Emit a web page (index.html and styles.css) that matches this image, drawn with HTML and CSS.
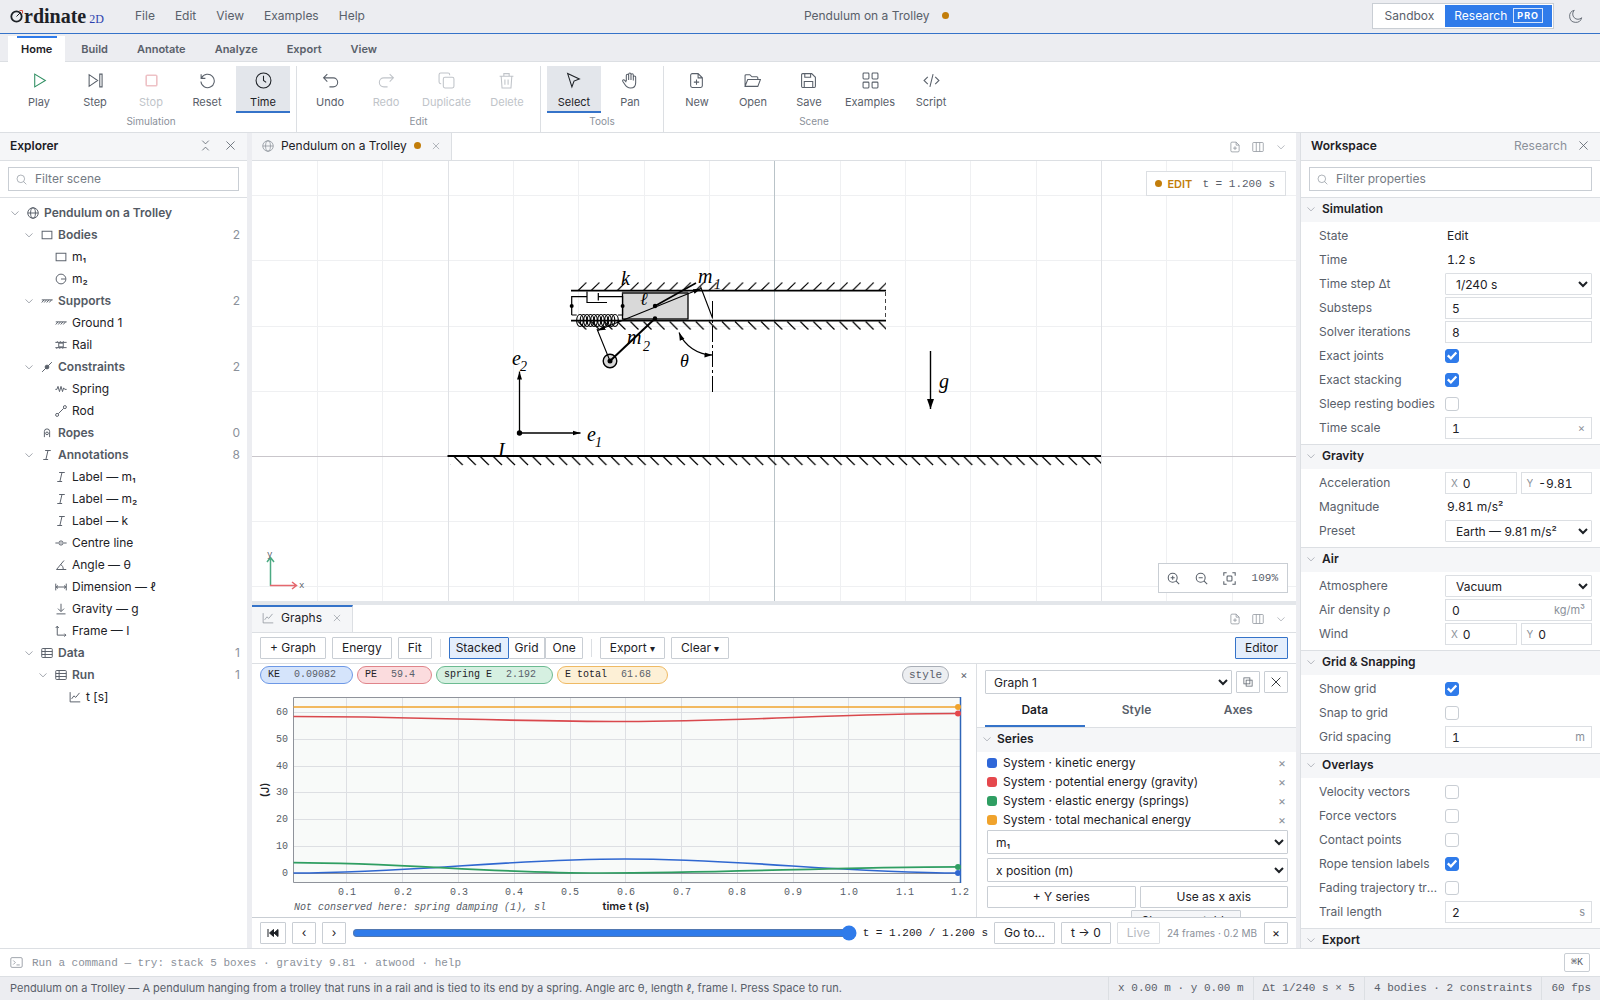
FILE: index.html
```html
<!DOCTYPE html>
<html lang="en">
<head>
<meta charset="utf-8">
<title>Pendulum on a Trolley — Ordinate 2D</title>
<link rel="stylesheet" href="styles.css">
</head>
<body>
<svg class="defs" aria-hidden="true">
  <symbol id="i-chev" viewBox="0 0 16 16"><path d="M2.500 5.500 8 11 13.500 5.500"/></symbol>
  <symbol id="i-x" viewBox="0 0 16 16"><path d="M3 3l10 10M13 3 3 13"/></symbol>
  <symbol id="i-search" viewBox="0 0 16 16"><circle cx="7" cy="7" r="5.500"/><path d="M11 11 15 15"/></symbol>
  <symbol id="i-globe" viewBox="0 0 16 16"><circle cx="8" cy="8" r="7"/><ellipse cx="8" cy="8" rx="3.200" ry="7"/><path d="M1 8h14"/></symbol>
  <symbol id="i-box" viewBox="0 0 16 16"><rect x="1.500" y="3" width="13" height="10"/></symbol>
  <symbol id="i-disc" viewBox="0 0 16 16"><circle cx="8" cy="8" r="6.500"/><path d="M8 8h6"/></symbol>
  <symbol id="i-ground" viewBox="0 0 16 16"><path d="M1 6.500h14.500M4 6.500l-3 3.500M7.300 6.500l-3 3.500M10.600 6.500l-3 3.500M14 6.500l-3 3.500"/></symbol>
  <symbol id="i-rail" viewBox="0 0 16 16"><path d="M.5 4.500h15M.5 11.500h15M2 4.500 3.500 3M6 4.500 7.500 3M10 4.500 11.500 3M2 13l1.500-1.500M6 13l1.500-1.500M10 13l1.500-1.500"/><rect x="5" y="5.500" width="6" height="5"/></symbol>
  <symbol id="i-joint" viewBox="0 0 16 16"><path d="M1.500 14.500l5-5M9.500 6.500l5-5"/><circle cx="8" cy="8" r="2.500" fill="currentColor"/></symbol>
  <symbol id="i-spring" viewBox="0 0 16 16"><path d="M.5 8.500h2l1.500-4 2 7 2-7 2 7 1.500-5 1.500 2h2.500"/></symbol>
  <symbol id="i-rod" viewBox="0 0 16 16"><circle cx="2.800" cy="13.200" r="2"/><circle cx="13.200" cy="2.800" r="2"/><path d="M4.400 11.600l7.200-7.200"/></symbol>
  <symbol id="i-rope" viewBox="0 0 16 16"><path d="M4.500 13.500V6a3.500 3.500 0 0 1 7 0v7.500"/><circle cx="8" cy="8.500" r="1.800"/></symbol>
  <symbol id="i-italic" viewBox="0 0 16 16"><path d="M5.500 2h7.500M3 14h6.500M9.300 2 6.500 14"/></symbol>
  <symbol id="i-centre" viewBox="0 0 16 16"><circle cx="8" cy="8" r="2.800"/><path d="M.5 8h4M7 8h2M11.500 8h4"/></symbol>
  <symbol id="i-angle" viewBox="0 0 16 16"><path d="M12 2 2 14h13M7.500 7.500c2.500 1 3.500 3.500 3.500 6.500"/></symbol>
  <symbol id="i-dim" viewBox="0 0 16 16"><path d="M1 3.500v9M15 3.500v9M1.500 8h13M4 6 1.500 8 4 10M12 6l2.500 2L12 10"/></symbol>
  <symbol id="i-down" viewBox="0 0 16 16"><path d="M8 1V11M4 7.500 8 11.500 12 7.500M2 14.500h12"/></symbol>
  <symbol id="i-frame" viewBox="0 0 16 16"><path d="M3 2v11.500h11.500M1 4l2-2.500L5 4M12.500 11.500l2 2-2 2"/></symbol>
  <symbol id="i-table" viewBox="0 0 16 16"><rect x="1" y="2" width="14" height="12" rx="1"/><path d="M1 6h14M1 10h14M5.500 2v12"/></symbol>
  <symbol id="i-chart" viewBox="0 0 16 16"><path d="M1.500 1.500v13H15M3.500 10.500 6.500 6.500l2.500 2 5-6"/></symbol>
  <symbol id="i-docplus" viewBox="0 0 16 16"><path d="M9.500 1.500H4a1.500 1.500 0 0 0-1.500 1.500v10A1.500 1.500 0 0 0 4 14.500h8a1.500 1.500 0 0 0 1.500-1.500V5.500zM9.500 1.500v4h4M8 7v5M5.500 9.500h5"/></symbol>
  <symbol id="i-cols" viewBox="0 0 16 16"><rect x="1" y="2" width="14" height="12" rx="1"/><path d="M5.700 2v12M10.300 2v12"/></symbol>
</svg>

<header class="titlebar">
  <div class="logo">
    <svg width="14" height="15" viewBox="0 0 14 15"><circle cx="6.500" cy="8.500" r="5.200" fill="none" stroke="#1d2126" stroke-width="1.800"/><path d="M6.500 8.500l4.500-4.500" stroke="#1d2126"/><path d="M9.500 2.500h3V5.500" fill="none" stroke="#d9503f"/></svg><span class="logo-word">rdinate</span><span class="logo-2d">2D</span>
  </div>
  <nav class="menus"><button>File</button><button>Edit</button><button>View</button><button>Examples</button><button>Help</button></nav>
  <div class="doc-title">Pendulum on a Trolley<i class="dot"></i></div>
  <div class="mode"><button>Sandbox</button><button class="on">Research<span class="pro">PRO</span></button></div>
  <button class="moon" aria-label="Dark theme"><svg width="14" height="14" viewBox="0 0 16 16"><path d="M6 1.500A7 7 0 1 0 14.500 10 5.800 5.800 0 0 1 6 1.500z"/></svg></button>
</header>

<nav class="ribbon-tabs">
  <button class="on">Home</button><button>Build</button><button>Annotate</button><button>Analyze</button><button>Export</button><button>View</button>
</nav>

<div class="ribbon">
  <section class="group">
    <div class="tools">
      <button><svg viewBox="0 0 16 16" class="green"><path d="M3.500 2v12L13.500 8z"/></svg>Play</button>
      <button><svg viewBox="0 0 16 16"><path d="M2 2.500v11L10 8zM12 2h2.200v12H12z"/></svg>Step</button>
      <button disabled><svg viewBox="0 0 16 16" class="red"><rect x="3" y="3" width="10" height="10" rx="1"/></svg>Stop</button>
      <button><svg viewBox="0 0 16 16"><path d="M2 2v4h4M2.500 5.500A6.300 6.300 0 1 1 1.800 9"/></svg>Reset</button>
      <button class="on"><svg viewBox="0 0 16 16"><circle cx="8" cy="8" r="7"/><path d="M8 3.500V8l2.500 1.800"/></svg>Time</button>
    </div>
    <h2>Simulation</h2>
  </section>
  <section class="group">
    <div class="tools">
      <button><svg viewBox="0 0 16 16"><path d="M5 2 1.500 5.500 5 9M1.500 5.500h9a4 4 0 0 1 0 8.500H7"/></svg>Undo</button>
      <button disabled><svg viewBox="0 0 16 16"><path d="M11 2l3.500 3.500L11 9M14.500 5.500h-9a4 4 0 0 0 0 8.500H9"/></svg>Redo</button>
      <button disabled><svg viewBox="0 0 16 16"><rect x="5" y="5" width="10" height="10" rx="1.500"/><path d="M3 11H2.500A1.500 1.500 0 0 1 1 9.500v-7A1.500 1.500 0 0 1 2.500 1h7A1.500 1.500 0 0 1 11 2.500V3"/></svg>Duplicate</button>
      <button disabled><svg viewBox="0 0 16 16"><path d="M1.500 4h13M5.500 4V1.500h5V4M3 4l.8 11h8.400L13 4M6.500 7v5M9.500 7v5"/></svg>Delete</button>
    </div>
    <h2>Edit</h2>
  </section>
  <section class="group">
    <div class="tools">
      <button class="on"><svg viewBox="0 0 16 16"><path d="M2.500 1.500 13.500 6.500 8.500 8.500 6.500 14z"/></svg>Select</button>
      <button><svg viewBox="0 0 16 16"><path d="M5 8.500V3.200a1.100 1.100 0 0 1 2.200 0V7.500 2a1.100 1.100 0 0 1 2.200 0V7.500 2.800a1.100 1.100 0 0 1 2.200 0V8 4.800a1.100 1.100 0 0 1 2.200 0V10c0 3-2 5-4.800 5S5 14 3.500 11.500L1.600 8.800c-.5-1 .8-1.900 1.700-1.200L5 9.500"/></svg>Pan</button>
    </div>
    <h2>Tools</h2>
  </section>
  <section class="group">
    <div class="tools">
      <button><svg><use href="#i-docplus"/></svg>New</button>
      <button><svg viewBox="0 0 16 16"><path d="M1 13V3.500A1 1 0 0 1 2 2.500h3.500l2 2H12a1 1 0 0 1 1 1V7M1 13.500 3.500 7h12L13 13.500z"/></svg>Open</button>
      <button><svg viewBox="0 0 16 16"><path d="M2.500 1.500H11L14.500 5v8.500a1 1 0 0 1-1 1h-11a1 1 0 0 1-1-1v-11a1 1 0 0 1 1-1zM4.500 1.500V5H10V1.500M4 14.500V9h8v5.500"/></svg>Save</button>
      <button><svg viewBox="0 0 16 16"><rect x="1" y="1" width="5.500" height="5.500" rx=".8"/><rect x="9.500" y="1" width="5.500" height="5.500" rx=".8"/><rect x="1" y="9.500" width="5.500" height="5.500" rx=".8"/><rect x="9.500" y="9.500" width="5.500" height="5.500" rx=".8"/></svg>Examples</button>
      <button><svg viewBox="0 0 16 16"><path d="M4.500 4.500 1 8l3.500 3.500M11.500 4.500 15 8l-3.500 3.500M9.500 2l-3 12"/></svg>Script</button>
    </div>
    <h2>Scene</h2>
  </section>
</div>

<main class="main">
  <aside class="explorer">
    <div class="panel-head"><h2>Explorer</h2><span class="grow"></span>
      <button aria-label="Collapse all"><svg viewBox="0 0 16 16"><path d="M4 2l4 4 4-4M4 14l4-4 4 4"/></svg></button>
      <button aria-label="Close explorer"><svg><use href="#i-x"/></svg></button></div>
    <div class="filter"><label><svg><use href="#i-search"/></svg><input placeholder="Filter scene" aria-label="Filter scene"></label></div>
    <ul class="tree">
      <li class="branch"><svg class="chev"><use href="#i-chev"/></svg><svg><use href="#i-globe"/></svg>Pendulum on a Trolley</li>
      <li class="branch l1"><svg class="chev"><use href="#i-chev"/></svg><svg><use href="#i-box"/></svg>Bodies<b>2</b></li>
      <li class="l2"><svg><use href="#i-box"/></svg>m₁</li>
      <li class="l2"><svg><use href="#i-disc"/></svg>m₂</li>
      <li class="branch l1"><svg class="chev"><use href="#i-chev"/></svg><svg><use href="#i-ground"/></svg>Supports<b>2</b></li>
      <li class="l2"><svg><use href="#i-ground"/></svg>Ground 1</li>
      <li class="l2"><svg><use href="#i-rail"/></svg>Rail</li>
      <li class="branch l1"><svg class="chev"><use href="#i-chev"/></svg><svg><use href="#i-joint"/></svg>Constraints<b>2</b></li>
      <li class="l2"><svg><use href="#i-spring"/></svg>Spring</li>
      <li class="l2"><svg><use href="#i-rod"/></svg>Rod</li>
      <li class="branch l1"><svg class="chev"></svg><svg><use href="#i-rope"/></svg>Ropes<b>0</b></li>
      <li class="branch l1"><svg class="chev"><use href="#i-chev"/></svg><svg><use href="#i-italic"/></svg>Annotations<b>8</b></li>
      <li class="l2"><svg><use href="#i-italic"/></svg>Label — m₁</li>
      <li class="l2"><svg><use href="#i-italic"/></svg>Label — m₂</li>
      <li class="l2"><svg><use href="#i-italic"/></svg>Label — k</li>
      <li class="l2"><svg><use href="#i-centre"/></svg>Centre line</li>
      <li class="l2"><svg><use href="#i-angle"/></svg>Angle — θ</li>
      <li class="l2"><svg><use href="#i-dim"/></svg>Dimension — ℓ</li>
      <li class="l2"><svg><use href="#i-down"/></svg>Gravity — g</li>
      <li class="l2"><svg><use href="#i-frame"/></svg>Frame — I</li>
      <li class="branch l1"><svg class="chev"><use href="#i-chev"/></svg><svg><use href="#i-table"/></svg>Data<b>1</b></li>
      <li class="branch l2c"><svg class="chev"><use href="#i-chev"/></svg><svg><use href="#i-table"/></svg>Run<b>1</b></li>
      <li class="l3"><svg><use href="#i-chart"/></svg>t [s]</li>
    </ul>
  </aside>

  <div class="center">
    <div class="tabs">
      <div class="tab"><svg><use href="#i-globe"/></svg>Pendulum on a Trolley<i class="dot"></i><button aria-label="Close tab"><svg><use href="#i-x"/></svg></button></div>
      <span class="grow"></span>
      <button aria-label="New document"><svg><use href="#i-docplus"/></svg></button><button aria-label="Split"><svg><use href="#i-cols"/></svg></button><button aria-label="More"><svg><use href="#i-chev"/></svg></button>
    </div>
    <div class="canvas">
      <svg class="scene" viewBox="252 161 1044 440" preserveAspectRatio="xMidYMid slice">
        <defs>
          <pattern id="hatch-up" x="571.700" y="281" width="13.067" height="10" patternUnits="userSpaceOnUse"><path d="M6.500 9.500 14.500 1.500M-6.567 9.500 1.433 1.500" stroke="#000" stroke-width="1.100"/></pattern>
          <pattern id="hatch-down" x="571.700" y="321" width="13.067" height="10" patternUnits="userSpaceOnUse"><path d="M6.500.5 14.500 8.500M-6.567.5 1.433 8.500" stroke="#000" stroke-width="1.200"/></pattern>
          <pattern id="hatch-ground" x="447.700" y="456" width="13.067" height="10" patternUnits="userSpaceOnUse"><path d="M6.500.5 15 9M-6.567.5 1.933 9" stroke="#000" stroke-width="1.200"/></pattern>
          <marker id="arr" viewBox="0 0 8 6" refX="8" refY="3" markerWidth="8" markerHeight="6" markerUnits="userSpaceOnUse" orient="auto-start-reverse"><path d="M0 .5 8 3 0 5.500z"/></marker>
          <marker id="arr-g" viewBox="0 0 10 7" refX="10" refY="3.500" markerWidth="10" markerHeight="7" markerUnits="userSpaceOnUse" orient="auto"><path d="M0 0 10 3.500 0 7z"/></marker>
        </defs>
        <path class="grid" d="M317.500 161v440M382.500 161v440M513.500 161v440M578.500 161v440M644.500 161v440M709.500 161v440M840.500 161v440M905.500 161v440M970.500 161v440M1036.500 161v440M1166.500 161v440M1232.500 161v440M252 195.500h1044M252 260.500h1044M252 326.500h1044M252 391.500h1044M252 521.500h1044M252 586.500h1044"/>
        <path class="grid-major" d="M448.500 161v440M1101.500 161v440"/>
        <path class="axis-y" d="M774.500 161v440"/><path class="axis-x" d="M252 456.500h1044"/>

        <rect x="450" y="456" width="651" height="10" fill="url(#hatch-ground)"/>
        <path d="M447.500 456h653.500" stroke="#000" stroke-width="2"/>

        <rect x="575" y="281" width="311" height="10" fill="url(#hatch-up)"/>
        <rect x="575" y="321" width="311" height="10" fill="url(#hatch-down)"/>
        <path d="M571 290.700h315M571 320.700h315" stroke="#000" stroke-width="1.800"/>
        <path d="M885.500 292v28" stroke="#444" stroke-dasharray="4 3"/>
        <rect x="622.500" y="293" width="65.500" height="26" fill="#d9d9d9" stroke="#000" stroke-width="1.300"/>
        <path d="M622 292.500h66" stroke="#444" stroke-width="1.800"/>

        <g fill="none" stroke="#000" stroke-width="1.200">
          <path d="M571.700 315V296.700H587M587 291.500v11h20M598.300 293v7.500M598.300 296.700h24.300V315h-4.600M571.700 315h5"/>
          <g stroke-width="1.200"><ellipse cx="580" cy="320.500" rx="3.300" ry="6"/><ellipse cx="583.500" cy="320.500" rx="3.300" ry="6"/><ellipse cx="587" cy="320.500" rx="3.300" ry="6"/><ellipse cx="590.500" cy="320.500" rx="3.300" ry="6"/><ellipse cx="594" cy="320.500" rx="3.300" ry="6"/><ellipse cx="597.500" cy="320.500" rx="3.300" ry="6"/><ellipse cx="601" cy="320.500" rx="3.300" ry="6"/><ellipse cx="604.500" cy="320.500" rx="3.300" ry="6"/><ellipse cx="608" cy="320.500" rx="3.300" ry="6"/><ellipse cx="611.500" cy="320.500" rx="3.300" ry="6"/><ellipse cx="615" cy="320.500" rx="3.300" ry="6"/></g>
        </g>
        <circle cx="610" cy="361" r="6.800" fill="#d9d9d9" stroke="#000" stroke-width="1.400"/>
        <path d="M610 361 655 318.500" stroke="#000" stroke-width="2"/>
        <path d="M655 306 696 283" stroke="#000" stroke-width="1.600"/>
        <path d="M597.500 330.500 701 288.500" stroke="#000" stroke-width="1.100" marker-start="url(#arr)" marker-end="url(#arr)"/>
        <path d="M610 361 597 329M712.700 318.500 700.500 286.500" stroke="#000" stroke-width="1.100"/>
        <circle cx="571.700" cy="306" r="2"/><circle cx="622.600" cy="306" r="2"/><circle cx="655" cy="306" r="2.200"/><circle cx="655" cy="318.500" r="2.200"/><circle cx="610" cy="361" r="2.500"/>
        <path d="M712.500 301v91" stroke="#000" stroke-dasharray="16 3 3 3"/>
        <path d="M679 332.500A37 37 0 0 0 712.500 355" fill="none" stroke="#000" stroke-width="1.200" marker-start="url(#arr)" marker-end="url(#arr)"/>

        <path d="M519.500 433V371.500" stroke="#000" stroke-width="1.300" marker-end="url(#arr)"/>
        <path d="M519.500 433h61" stroke="#000" stroke-width="1.300" marker-end="url(#arr)"/>
        <circle cx="519.500" cy="433" r="2.700"/>
        <path d="M930.500 351v58" stroke="#000" stroke-width="1.400" marker-end="url(#arr-g)"/>

        <g class="sym">
          <text x="621" y="285">k</text>
          <text x="698" y="283">m</text><text class="sub" x="714" y="289">1</text>
          <text x="627" y="344">m</text><text class="sub" x="643" y="351">2</text>
          <text class="small" x="640" y="305">ℓ</text><text class="small" x="680" y="367">θ</text>
          <text x="512" y="365">e</text><text class="sub" x="520" y="371">2</text>
          <text x="587" y="441">e</text><text class="sub" x="595" y="447">1</text>
          <text x="498" y="457">I</text><text x="939" y="388">g</text>
        </g>
        <path d="M270.500 586V558M267 562l3.500-4.500 3.500 4.500" class="gizmo-y"/>
        <path d="M270 585.500h26.500M292 582l4.500 3.500-4.500 3.500" class="gizmo-x"/>
        <text x="267" y="557" class="gizmo-t">y</text><text x="299" y="588" class="gizmo-t">x</text>
      </svg>
      <div class="badge"><i class="dot"></i><b>EDIT</b><span>t = 1.200 s</span></div>
      <div class="zoombox">
        <button aria-label="Zoom in"><svg viewBox="0 0 16 16"><circle cx="7" cy="7" r="5.500"/><path d="M11 11l4 4M7 4.500v5M4.500 7h5"/></svg></button>
        <button aria-label="Zoom out"><svg viewBox="0 0 16 16"><circle cx="7" cy="7" r="5.500"/><path d="M11 11l4 4M4.500 7h5"/></svg></button>
        <button aria-label="Fit to view"><svg viewBox="0 0 16 16"><path d="M1 4.500V1h3.500M11.500 1H15v3.500M15 11.500V15h-3.500M4.500 15H1v-3.500"/><rect x="5" y="5" width="6" height="6" rx="1"/></svg></button>
        <button class="pct">109%</button>
      </div>
    </div>

    <div class="tabs lower">
      <div class="tab on"><svg><use href="#i-chart"/></svg>Graphs<button aria-label="Close tab"><svg><use href="#i-x"/></svg></button></div>
      <span class="grow"></span>
      <button aria-label="New document"><svg><use href="#i-docplus"/></svg></button><button aria-label="Split"><svg><use href="#i-cols"/></svg></button><button aria-label="More"><svg><use href="#i-chev"/></svg></button>
    </div>
    <div class="toolbar">
      <button class="btn">+ Graph</button><button class="btn">Energy</button><button class="btn">Fit</button><i class="sep"></i>
      <div class="seg"><button class="btn on">Stacked</button><button class="btn">Grid</button><button class="btn">One</button></div><i class="sep"></i>
      <button class="btn">Export <small>▾</small></button><button class="btn">Clear <small>▾</small></button>
      <span class="grow"></span><button class="btn on">Editor</button>
    </div>
    <div class="graph-area">
      <div class="graph">
        <div class="legend">
          <span class="chip blue">KE<em>0.09082</em></span><span class="chip rose">PE<em>59.4</em></span><span class="chip mint">spring E<em>2.192</em></span><span class="chip amber">E total<em>61.68</em></span>
          <span class="grow"></span><button class="chip plain">style</button><button class="tiny" aria-label="Remove graph">×</button>
        </div>
        <svg class="plot" viewBox="252 686 724 231">
          <rect x="293.500" y="697.500" width="667" height="185" fill="#f8faf9"/>
          <path class="plot-grid" d="M346.500 698v184M402.500 698v184M458.500 698v184M514.500 698v184M570.500 698v184M625.500 698v184M681.500 698v184M737.500 698v184M793.500 698v184M848.500 698v184M904.500 698v184M294 712.500h666M294 739.500h666M294 766.500h666M294 792.500h666M294 819.500h666M294 846.500h666"/>
          <path d="M294 873.500h666" stroke="#8b8f99"/>
          <path d="M293.500 882.500v-185h667M293.500 882.500h667" fill="none" stroke="#8f939b"/>
          <g fill="none" stroke-width="1.700">
            <path d="M293.500 707H960.500" stroke="#f0a32c"/>
            <path d="M293.500 716.500C414 716.500 504 721.500 625 721.500S839 713.500 960.500 713.500" stroke="#d9484d"/>
            <path d="M293.500 873C414 873 504 859 625 859S839 873 960.500 873" stroke="#2f67d0"/>
            <path d="M293.500 862.700C405 863 488 873 600 873C730 873 830 867 960.500 866.800" stroke="#2f9e62"/>
          </g>
          <path d="M960.500 697v186" stroke="#2f65b8" stroke-width="1.500"/>
          <circle cx="958" cy="707" r="3" fill="#f0a32c"/><circle cx="958" cy="713.500" r="3" fill="#e5484d"/><circle cx="958" cy="873" r="3" fill="#2f67d0"/><circle cx="958" cy="867" r="3" fill="#2f9e62"/>
          <g class="ticks" text-anchor="end"><text x="288" y="715">60</text><text x="288" y="742">50</text><text x="288" y="769">40</text><text x="288" y="795">30</text><text x="288" y="822">20</text><text x="288" y="849">10</text><text x="288" y="876">0</text></g>
          <g class="ticks" text-anchor="middle"><text x="347" y="895">0.1</text><text x="403" y="895">0.2</text><text x="459" y="895">0.3</text><text x="514" y="895">0.4</text><text x="570" y="895">0.5</text><text x="626" y="895">0.6</text><text x="682" y="895">0.7</text><text x="737" y="895">0.8</text><text x="793" y="895">0.9</text><text x="849" y="895">1.0</text><text x="905" y="895">1.1</text><text x="960" y="895">1.2</text></g>
          <text x="294" y="910" class="note">Not conserved here: spring damping (1), sl</text>
          <text x="626" y="910" class="axis-name" text-anchor="middle">time t (s)</text>
          <text x="269" y="790" class="axis-name" text-anchor="middle" transform="rotate(-90 269 790)">(J)</text>
        </svg>
      </div>
      <div class="editor">
        <div class="editor-top"><select aria-label="Graph"><option>Graph 1</option></select>
          <button class="btn sq" aria-label="Duplicate graph"><svg viewBox="0 0 16 16"><rect x="2.500" y="2.500" width="8" height="8"/><rect x="5.500" y="5.500" width="8" height="8"/></svg></button>
          <button class="btn sq" aria-label="Close editor"><svg class="dark"><use href="#i-x"/></svg></button></div>
        <div class="editor-tabs"><button class="on">Data</button><button>Style</button><button>Axes</button></div>
        <h3 class="sect"><svg><use href="#i-chev"/></svg>Series</h3>
        <ul class="series">
          <li><i class="c1"></i>System · kinetic energy<button aria-label="Remove">×</button></li>
          <li><i class="c2"></i>System · potential energy (gravity)<button aria-label="Remove">×</button></li>
          <li><i class="c3"></i>System · elastic energy (springs)<button aria-label="Remove">×</button></li>
          <li><i class="c4"></i>System · total mechanical energy<button aria-label="Remove">×</button></li>
        </ul>
        <div class="form">
          <select aria-label="Body"><option>m₁</option></select>
          <select aria-label="Quantity"><option>x position (m)</option></select>
          <div class="pair"><button class="btn">+ Y series</button><button class="btn">Use as x axis</button></div>
          <button class="btn show">Show as a table</button>
        </div>
      </div>
    </div>
    <div class="timeline">
      <button class="btn first" aria-label="First frame"><svg viewBox="0 0 12 10"><path d="M1 1v8M6.500 1.500v7L2.500 5zM11 1.500v7L7 5z"/></svg></button><button class="btn step">‹</button><button class="btn step">›</button>
      <input type="range" min="0" max="1200" value="1200" aria-label="Time">
      <output>t = 1.200 / 1.200 s</output>
      <button class="btn">Go to…</button><button class="btn">t → 0</button><button class="btn" disabled>Live</button>
      <span class="frames">24 frames · 0.2 MB</span><button class="btn close">×</button>
    </div>
  </div>

  <aside class="workspace">
    <div class="panel-head"><h2>Workspace</h2><span class="grow"></span><span class="muted">Research</span><button aria-label="Close workspace"><svg><use href="#i-x"/></svg></button></div>
    <div class="filter"><label><svg><use href="#i-search"/></svg><input placeholder="Filter properties" aria-label="Filter properties"></label></div>
    <div class="props">
      <section><h3 class="sect"><svg><use href="#i-chev"/></svg>Simulation</h3>
        <div class="row"><span>State</span><output>Edit</output></div>
        <div class="row"><span>Time</span><output>1.2 s</output></div>
        <div class="row"><label for="dt">Time step Δt</label><select id="dt"><option>1/240 s</option></select></div>
        <div class="row"><label for="sub">Substeps</label><input id="sub" type="text" value="5"></div>
        <div class="row"><label for="it">Solver iterations</label><input id="it" type="text" value="8"></div>
        <div class="row"><label for="ej">Exact joints</label><input id="ej" type="checkbox" checked></div>
        <div class="row"><label for="es">Exact stacking</label><input id="es" type="checkbox" checked></div>
        <div class="row"><label for="sl">Sleep resting bodies</label><input id="sl" type="checkbox"></div>
        <div class="row"><label for="ts">Time scale</label><div class="unit"><input id="ts" type="text" value="1"><span>×</span></div></div>
      </section>
      <section><h3 class="sect"><svg><use href="#i-chev"/></svg>Gravity</h3>
        <div class="row"><span>Acceleration</span><div class="xy"><label>X<input type="text" value="0"></label><label>Y<input type="text" value="-9.81"></label></div></div>
        <div class="row"><span>Magnitude</span><output>9.81 m/s²</output></div>
        <div class="row"><label for="pr">Preset</label><select id="pr"><option>Earth — 9.81 m/s²</option></select></div>
      </section>
      <section><h3 class="sect"><svg><use href="#i-chev"/></svg>Air</h3>
        <div class="row"><label for="at">Atmosphere</label><select id="at"><option>Vacuum</option></select></div>
        <div class="row"><label for="ad">Air density ρ</label><div class="unit"><input id="ad" type="text" value="0"><span>kg/m³</span></div></div>
        <div class="row"><span>Wind</span><div class="xy"><label>X<input type="text" value="0"></label><label>Y<input type="text" value="0"></label></div></div>
      </section>
      <section><h3 class="sect"><svg><use href="#i-chev"/></svg>Grid &amp; Snapping</h3>
        <div class="row"><label for="sg">Show grid</label><input id="sg" type="checkbox" checked></div>
        <div class="row"><label for="sn">Snap to grid</label><input id="sn" type="checkbox"></div>
        <div class="row"><label for="gs">Grid spacing</label><div class="unit"><input id="gs" type="text" value="1"><span>m</span></div></div>
      </section>
      <section><h3 class="sect"><svg><use href="#i-chev"/></svg>Overlays</h3>
        <div class="row"><label for="vv">Velocity vectors</label><input id="vv" type="checkbox"></div>
        <div class="row"><label for="fv">Force vectors</label><input id="fv" type="checkbox"></div>
        <div class="row"><label for="cp">Contact points</label><input id="cp" type="checkbox"></div>
        <div class="row"><label for="rt">Rope tension labels</label><input id="rt" type="checkbox" checked></div>
        <div class="row"><label for="ft">Fading trajectory trails</label><input id="ft" type="checkbox"></div>
        <div class="row"><label for="tl">Trail length</label><div class="unit"><input id="tl" type="text" value="2"><span>s</span></div></div>
      </section>
      <section><h3 class="sect"><svg><use href="#i-chev"/></svg>Export</h3></section>
    </div>
  </aside>
</main>

<div class="command"><svg viewBox="0 0 16 16"><rect x="1" y="2" width="14" height="12" rx="1.500"/><path d="M4 5.500 6.500 8 4 10.500M8 11h4"/></svg><input aria-label="Command" placeholder="Run a command — try: stack 5 boxes · gravity 9.81 · atwood · help"><kbd>⌘K</kbd></div>
<footer class="status"><p>Pendulum on a Trolley — A pendulum hanging from a trolley that runs in a rail and is tied to its end by a spring. Angle arc θ, length ℓ, frame I. Press Space to run.</p><span>x 0.00 m · y 0.00 m</span><span>Δt 1/240 s × 5</span><span>4 bodies · 2 constraints</span><span>60 fps</span></footer>
</body>
</html>
```
FILE: styles.css
```css
:root {
  --blue: #2f7bea;
  --line: #dcdfe3;
  --line2: #c9ced4;
  --chrome: #ecedf1;
  --head: #f5f6f8;
  --ink: #1d2126;
  --mid: #59606a;
  --soft: #8b919a;
  --mono: "Liberation Mono", "DejaVu Sans Mono", monospace;
}
* { box-sizing: border-box; }
html, body { height: 100%; }
body { margin: 0; display: flex; flex-direction: column; overflow: hidden; background: #fff; color: var(--ink); font: 12px/16px Inter, sans-serif; }
button, input, select, output, kbd { font: inherit; color: inherit; }
button { border: 0; background: none; padding: 0; margin: 0; }
h2, h3, p, ul { margin: 0; padding: 0; font-size: 12px; }
ul { list-style: none; }
svg { fill: none; stroke: currentColor; flex: none; }
.defs { position: absolute; width: 0; height: 0; }
.grow { flex: 1; }
.dot { width: 7px; height: 7px; border-radius: 50%; background: #c27d0a; flex: none; }

.titlebar { display: flex; align-items: center; height: 34px; flex: none; background: var(--chrome); border-bottom: 1px solid #3573c9; padding: 0 17px 2px 0; }
.logo { display: flex; align-items: center; padding-left: 10px; width: 125px; }
.logo-word { font: bold 20px/24px "Liberation Serif", serif; }
.logo-2d { font: 12px/16px "Liberation Serif", serif; color: #2b3fae; margin: 6px 0 0 3px; }
.menus { display: flex; color: var(--mid); }
.menus button { padding: 0 10px; }
.doc-title { flex: 1; display: flex; align-items: center; justify-content: center; gap: 12px; padding-left: 6px; color: var(--mid); }
.mode { display: flex; border: 1px solid var(--line2); background: #fff; height: 26px; padding: 1px; color: var(--mid); }
.mode button { padding: 0 11px; display: flex; align-items: center; gap: 6px; }
.mode .on { background: var(--blue); color: #fff; padding: 0 9px; }
.pro { border: 1px solid #d3e3fb; font-size: 9px; line-height: 13px; font-weight: 700; letter-spacing: 1px; padding: 0 3px; }
.moon { margin-left: 15px; display: flex; color: var(--mid); }

.ribbon-tabs { display: flex; gap: 3px; height: 28px; flex: none; padding: 2px 8px 0; background: var(--chrome); border-bottom: 1px solid var(--line); }
.ribbon-tabs button { padding: 0 13px; font-size: 11px; font-weight: 600; color: var(--mid); }
.ribbon-tabs .on { background: #fff linear-gradient(var(--blue), var(--blue)) center top / 40px 2px no-repeat; color: var(--ink); height: 26px; }
.ribbon { display: flex; height: 71px; flex: none; padding: 4px 6px 0; border-bottom: 1px solid var(--line); }
.group { padding: 0 6px; border-right: 1px solid var(--line); }
.group:last-child { border: 0; }
.tools { display: flex; gap: 2px; }
.tools button { min-width: 54px; height: 47px; padding: 6px 7px 0; display: flex; flex-direction: column; align-items: center; gap: 5px; font-size: 11px; line-height: 16px; color: var(--mid); border-bottom: 2px solid transparent; }
.tools svg { width: 17px; height: 17px; }
.tools .on { background: #e3e6eb; border-color: #3573c9; color: var(--ink); }
.tools button:disabled { color: #c0c4c9; }
.tools svg.green { color: #2f8f62; }
.tools svg.red { color: #eec2c6; stroke-width: 1.5; }
.group h2 { font-size: 10px; line-height: 16px; font-weight: 400; color: var(--soft); text-align: center; }

.main { flex: 1; min-height: 0; display: grid; grid-template-columns: 247px minmax(0, 1fr) 299px; gap: 5px; background: var(--chrome); }
.explorer, .workspace, .center { background: #fff; min-height: 0; display: flex; flex-direction: column; overflow: hidden; }
.panel-head { display: flex; align-items: center; gap: 10px; height: 28px; flex: none; padding: 0 10px 2px; background: var(--head); border-bottom: 1px solid var(--line); }
.panel-head h2, .sect { font-weight: 600; }
.panel-head svg { width: 13px; height: 13px; display: block; color: var(--mid); }
.explorer .panel-head { gap: 12px; }
.muted { color: var(--soft); }
.filter { padding: 6px 8px; border-bottom: 1px solid var(--line); }
.filter label { display: flex; align-items: center; gap: 8px; height: 24px; border: 1px solid var(--line2); padding: 0 7px; color: var(--soft); }
.filter svg { width: 11px; height: 11px; }
.filter input { border: 0; padding: 0; outline: 0; width: 100%; background: none; }
.filter input::placeholder { color: #757b84; }
.tree { padding-top: 4px; }
.tree li { display: flex; align-items: center; height: 22px; padding: 0 7px 0 10px; }
.tree svg { width: 12px; height: 12px; margin-right: 5px; color: var(--mid); stroke-width: 1.3; }
.tree .chev { width: 10px; height: 10px; margin-right: 7px; color: var(--soft); }
.tree .branch { font-weight: 600; color: #535a64; }
.tree b { margin-left: auto; font-weight: 400; color: var(--soft); }
.tree .l1 { padding-left: 24px; }
.tree .l2 { padding-left: 55px; }
.tree .l2c { padding-left: 38px; }
.tree .l3 { padding-left: 69px; }

.tabs { display: flex; align-items: center; height: 28px; flex: none; border-bottom: 1px solid var(--line); padding-right: 8px; gap: 9px; }
.tabs > button, .tab button { display: flex; color: var(--soft); }
.tabs > button { width: 14px; justify-content: center; }
.tabs svg { width: 12px; height: 12px; }
.tabs > button:last-child svg { width: 10px; height: 10px; }
.tab { display: flex; align-items: center; height: 27px; padding: 0 10px 2px; gap: 7px; border-right: 1px solid var(--line); background: var(--head); }
.tab > svg { color: var(--soft); }
.tab button { margin-left: 3px; }
.tab button svg { width: 10px; height: 10px; }
.canvas { flex: 1; min-height: 0; position: relative; overflow: hidden; }
.lower { border-top: 4px solid #e3e6ea; height: 32px; }
.lower .tab { border-top: 2px solid #3573c9; padding-bottom: 4px; }
.scene { width: 100%; height: 100%; display: block; fill: #000; stroke: none; }
.grid { stroke: #eff0f2; }
.grid-major { stroke: #e0e2e6; }
.axis-y { stroke: #b9c3c8; }
.axis-x { stroke: #c9c6cb; }
.sym { font: italic 20px "Liberation Serif", serif; }
.sym .sub { font-size: 14px; }
.sym .small { font-size: 18px; }
.gizmo-y { stroke: #4caa83; fill: none; stroke-width: 1.5; }
.gizmo-x { stroke: #e5686e; fill: none; stroke-width: 1.5; }
.gizmo-t { font: 9px var(--mono); fill: var(--mid); }
.badge { position: absolute; top: 10px; right: 10px; display: flex; align-items: center; height: 25px; padding: 0 10px 0 8px; gap: 5px; background: #fff; border: 1px solid var(--line); color: var(--mid); font: 11px/16px var(--mono); }
.badge b { font: 600 11px/16px Inter, sans-serif; color: #c27d0a; margin-right: 5px; }
.zoombox { position: absolute; right: 8px; bottom: 8px; display: flex; align-items: center; gap: 15px; height: 30px; padding: 0 9px 0 8px; background: #fff; border: 1px solid var(--line2); color: var(--mid); }
.zoombox button { display: flex; }
.zoombox svg { width: 13px; height: 13px; stroke-width: 1.3; }
.zoombox .pct { font: 11px/16px var(--mono); margin-left: 1px; }

.toolbar { display: flex; align-items: center; gap: 6px; height: 31px; flex: none; padding: 0 8px; border-bottom: 1px solid var(--line); }
.btn { height: 22px; padding: 0 9px; border: 1px solid var(--line2); border-radius: 1px; background: #fff; white-space: nowrap; color: var(--ink); }
.btn:disabled { color: #b5b9bf; border-color: var(--line); }
.btn.on { background: #e4eefc; border-color: #3573c9; }
.btn small { font-size: 10px; }
.sep { width: 1px; height: 18px; margin: 0 2px; background: var(--line); }
.seg { display: flex; }
.seg .btn { padding: 0 6px; }
.seg .btn + .btn { border-left-width: 0; }
.seg .btn + .btn + .btn { border-left-width: 1px; }
.graph-area { display: flex; height: 253px; flex: none; }
.graph { flex: 1; min-width: 0; display: flex; flex-direction: column; }
.legend { display: flex; align-items: center; gap: 4px; height: 22px; padding: 0 7px 0 8px; }
.chip { display: flex; align-items: center; gap: 14px; height: 18px; padding: 0 16px 0 7px; border: 1px solid; border-radius: 9px; font: 10px/14px var(--mono); }
.chip em { font-style: normal; color: var(--mid); }
.blue { background: #d5e4fb; border-color: #6d98e6; }
.rose { background: #fbdcde; border-color: #e0848a; }
.mint { background: #d6f0e1; border-color: #6cbb91; }
.amber { background: #fdf0d6; border-color: #efba64; }
.plain { background: #eceef1; border-color: #a9aeb6; padding: 0 6px; font-size: 11px; color: var(--mid); }
.tiny { font-size: 11px; width: 10px; margin-left: 6px; color: var(--mid); }
.plot { width: 100%; height: 231px; fill: #000; stroke: none; }
.plot-grid { stroke: #dddfe3; }
.ticks { font: 10px var(--mono); fill: #565c66; }
.note { font: italic 10px var(--mono); fill: #565c66; }
.axis-name { font: 600 11px Inter, sans-serif; fill: var(--ink); }
.editor { width: 320px; flex: none; border-left: 1px solid var(--line); overflow: hidden; }
select { height: 24px; border: 1px solid var(--line2); border-radius: 1px; background: #fff; padding: 0 4px; width: 100%; color: var(--ink); outline: 0; }
.editor-top { display: flex; align-items: center; gap: 4px; padding: 6px 8px 0; }
.sq, .close { width: 24px; padding: 0; display: flex; align-items: center; justify-content: center; flex: none; }
.sq svg { width: 12px; height: 12px; color: var(--mid); }
.sq svg.dark { width: 14px; height: 14px; color: var(--ink); }
.editor-tabs { display: grid; grid-template-columns: repeat(3, 1fr); height: 34px; padding: 0 8px; column-gap: 2px; border-bottom: 1px solid var(--line); }
.editor-tabs button { font-weight: 600; color: var(--mid); border-bottom: 2px solid transparent; }
.editor-tabs .on { color: var(--ink); border-color: #3573c9; }
.sect { display: flex; align-items: center; gap: 6px; height: 24px; padding: 0 5px 2px; background: var(--head); }
.sect svg { width: 10px; height: 10px; color: var(--soft); }
.editor .sect { gap: 5px; }
.series { padding: 1px 8px 1px 10px; }
.series li { display: flex; align-items: center; gap: 6px; height: 19px; }
.series i { width: 10px; height: 10px; border-radius: 3px; }
.series button { margin-left: auto; width: 12px; color: var(--soft); }
.c1 { background: #2f67d8; } .c2 { background: #e5484d; } .c3 { background: #2f9e62; } .c4 { background: #f0a32c; }
.form { display: grid; gap: 4px; padding: 0 8px 0 10px; }
.pair { display: grid; grid-template-columns: 1fr 1fr; gap: 4px; }
.show { justify-self: end; margin-right: 47px; background: var(--head); margin-top: -2px; }
.timeline { display: flex; align-items: center; gap: 6px; height: 31px; flex: none; padding: 0 8px; border-top: 1px solid var(--line2); }
.first { width: 26px; padding: 0 6px; display: flex; align-items: center; }
.first svg { width: 12px; height: 10px; fill: currentColor; }
.step { width: 24px; padding: 0; }
.timeline input { flex: 1; min-width: 0; margin: 0; accent-color: var(--blue); }
.timeline output { font: 11px/16px var(--mono); }
.frames { font-size: 10px; color: var(--soft); margin: 0 1px; }

.workspace { box-shadow: -1px 0 var(--line); }
.props { flex: 1; min-height: 0; overflow: hidden; }
.props section { padding-bottom: 4px; border-bottom: 1px solid var(--line); }
.props .sect { margin-bottom: 2px; }
.row { display: grid; grid-template-columns: 120px 1fr; column-gap: 6px; align-items: center; height: 24px; padding: 0 8px 0 18px; color: var(--mid); }
.row > :first-child { overflow: hidden; text-overflow: ellipsis; white-space: nowrap; }
.row output { color: var(--ink); padding-left: 2px; }
.row output, .row input { font-variant-numeric: tabular-nums; }
.row select { height: 22px; padding: 0 6px; border-color: var(--line); min-width: 0; }
.row input[type="text"] { width: 100%; min-width: 0; height: 22px; border: 1px solid var(--line); background: #fff; color: var(--ink); padding: 0 6px; outline: 0; }
.row input[type="checkbox"] { appearance: none; width: 14px; height: 14px; margin: 0; border: 1px solid var(--line2); border-radius: 3px; background: #fff; }
.row input[type="checkbox"]:checked { background: var(--blue); border-color: var(--blue); }
.row input[type="checkbox"]:checked::before { content: ""; display: block; width: 12px; height: 12px; background: #fff; clip-path: polygon(8% 52%, 22% 38%, 40% 56%, 79% 14%, 93% 28%, 41% 84%); }
.unit, .xy label { display: flex; align-items: center; height: 22px; border: 1px solid var(--line); color: var(--soft); }
.unit { font-size: 11px; padding-right: 6px; }
.row .unit input[type="text"], .row .xy input[type="text"] { border: 0; height: 20px; font-size: 12px; }
.xy { display: grid; grid-template-columns: 1fr 1fr; gap: 4px; min-width: 0; }
.xy label { font-size: 10px; padding-left: 5px; min-width: 0; }
.row .xy input[type="text"] { padding: 0 5px; }

.command { display: flex; align-items: center; gap: 9px; height: 28px; flex: none; padding: 0 10px; border-top: 1px solid var(--line); color: var(--soft); }
.command svg { width: 13px; height: 13px; }
.command input { flex: 1; border: 0; padding: 0; outline: 0; font: 11px/16px var(--mono); }
.command input::placeholder { color: var(--soft); }
kbd { border: 1px solid var(--line2); border-radius: 2px; padding: 0 6px; font: 10px/17px var(--mono); color: var(--mid); }
.status { display: flex; align-items: stretch; height: 24px; flex: none; background: var(--chrome); border-top: 1px solid var(--line); color: var(--mid); font-size: 11px; line-height: 23px; }
.status p { flex: 1; padding-left: 10px; font-size: 11px; }
.status span { border-left: 1px solid var(--line); padding: 0 9px; font-family: var(--mono); font-size: 11px; }
```
